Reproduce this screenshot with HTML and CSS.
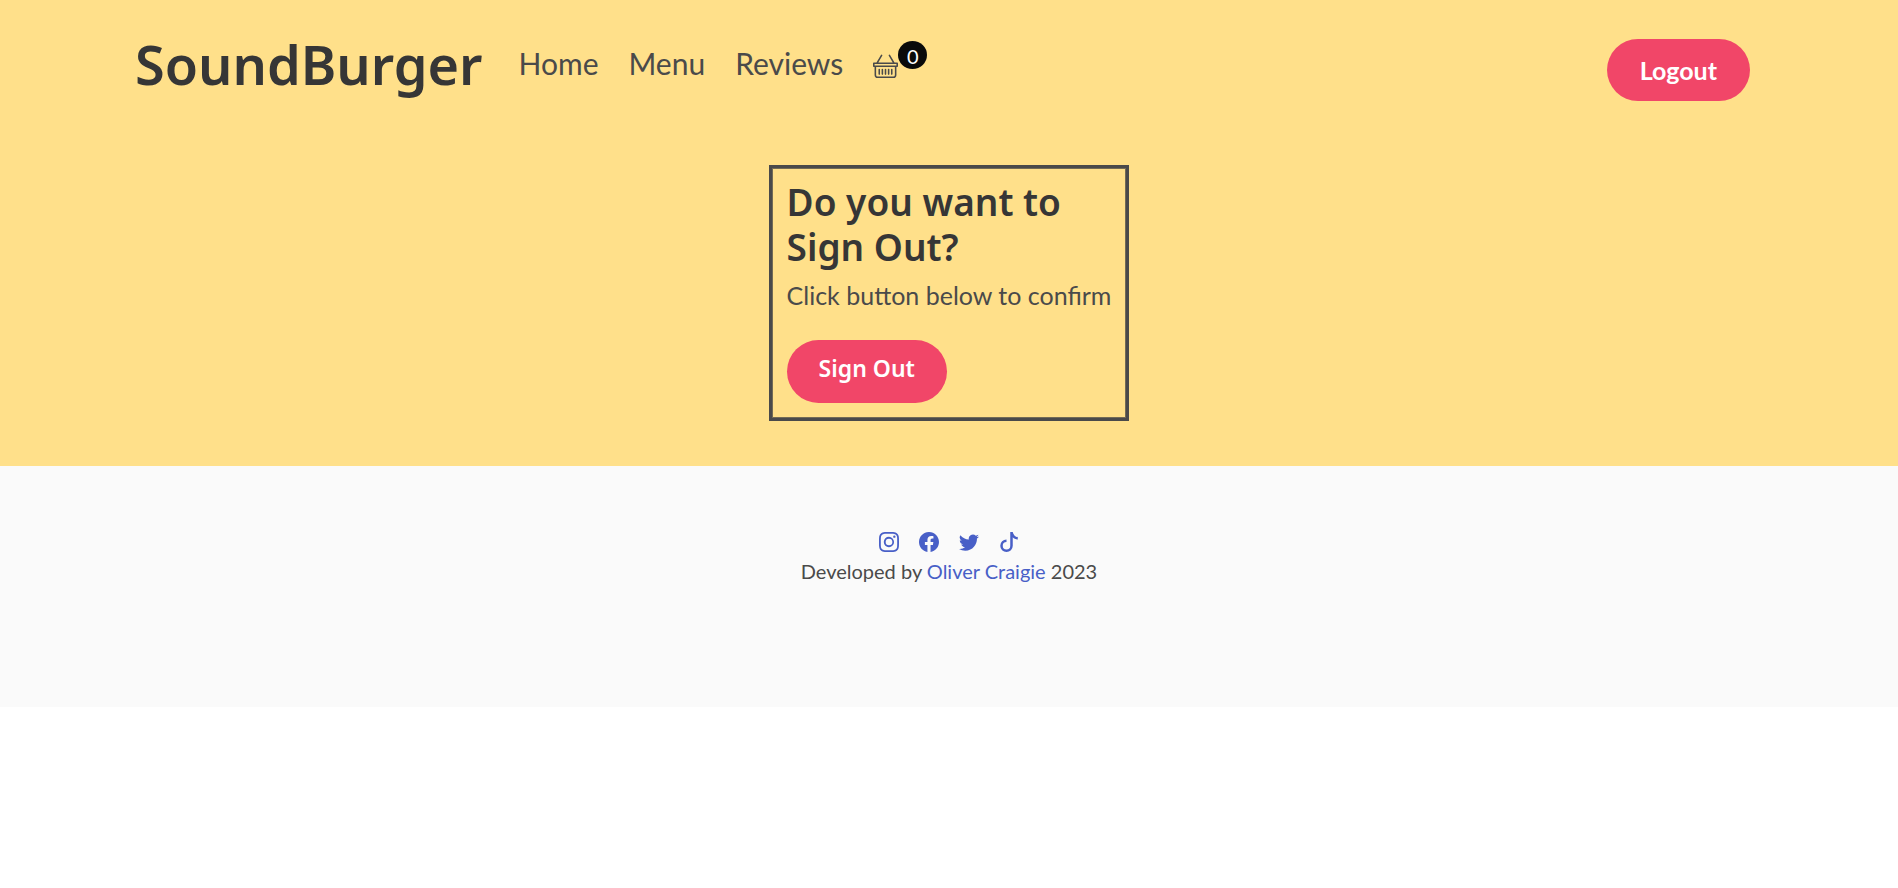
FILE: index.html
```html
<!DOCTYPE html>
<html lang="en">
<head>
<meta charset="utf-8">
<title>SoundBurger - Sign Out</title>
<link rel="stylesheet" href="styles.css">
</head>
<body>
<div class="hero">
  <header class="navbar">
    <a class="brand" href="#">SoundBurger</a>
    <nav class="links">
      <a class="nav-link" href="#">Home</a>
      <a class="nav-link" href="#">Menu</a>
      <a class="nav-link" href="#">Reviews</a>
      <a class="basket" href="#" aria-label="Basket">
        <svg class="basket-icon" viewBox="0 0 16 16" aria-hidden="true"><path d="M5.757 1.071a.5.5 0 0 1 .172.686L3.383 6h9.234L10.07 1.757a.5.5 0 1 1 .858-.514L13.783 6H15.5a.5.5 0 0 1 .5.5v2a.5.5 0 0 1-.5.5H15v5a2 2 0 0 1-2 2H3a2 2 0 0 1-2-2V9H.5a.5.5 0 0 1-.5-.5v-2A.5.5 0 0 1 .5 6h1.717L5.07 1.243a.5.5 0 0 1 .686-.172zM2 9v5a1 1 0 0 0 1 1h10a1 1 0 0 0 1-1V9H2zM1 7v1h14V7H1zm3 3a.5.5 0 0 1 .5.5v3a.5.5 0 0 1-1 0v-3A.5.5 0 0 1 4 10zm2 0a.5.5 0 0 1 .5.5v3a.5.5 0 0 1-1 0v-3A.5.5 0 0 1 6 10zm2 0a.5.5 0 0 1 .5.5v3a.5.5 0 0 1-1 0v-3A.5.5 0 0 1 8 10zm2 0a.5.5 0 0 1 .5.5v3a.5.5 0 0 1-1 0v-3a.5.5 0 0 1 .5-.5zm2 0a.5.5 0 0 1 .5.5v3a.5.5 0 0 1-1 0v-3a.5.5 0 0 1 .5-.5z"/></svg>
        <span class="count">0</span>
      </a>
    </nav>
    <button class="button logout" type="button">Logout</button>
  </header>
  <main class="content">
    <form class="panel">
      <h1 class="title">Do you want to<br>Sign Out?</h1>
      <p class="text">Click button below to confirm</p>
      <button class="button signout" type="button">Sign Out</button>
    </form>
  </main>
</div>
<footer class="footer">
  <div class="social">
    <a class="social-link" href="#" aria-label="Instagram"><svg class="social-icon" viewBox="0 0 16 16" aria-hidden="true"><path d="M8 0C5.829 0 5.556.01 4.703.048 3.85.088 3.269.222 2.76.42a3.917 3.917 0 0 0-1.417.923A3.927 3.927 0 0 0 .42 2.76C.222 3.268.087 3.85.048 4.7.01 5.555 0 5.827 0 8.001c0 2.172.01 2.444.048 3.297.04.852.174 1.433.372 1.942.205.526.478.972.923 1.417.444.445.89.719 1.416.923.51.198 1.09.333 1.942.372C5.555 15.99 5.827 16 8 16s2.444-.01 3.298-.048c.851-.04 1.434-.174 1.943-.372a3.916 3.916 0 0 0 1.416-.923c.445-.445.718-.891.923-1.417.197-.509.332-1.09.372-1.942C15.99 10.445 16 10.173 16 8s-.01-2.445-.048-3.299c-.04-.851-.175-1.433-.372-1.941a3.926 3.926 0 0 0-.923-1.417A3.911 3.911 0 0 0 13.24.42c-.51-.198-1.092-.333-1.943-.372C10.443.01 10.172 0 7.998 0h.003zm-.717 1.442h.718c2.136 0 2.389.007 3.232.046.78.035 1.204.166 1.486.275.373.145.64.319.92.599.28.28.453.546.598.92.11.281.24.705.275 1.485.039.843.047 1.096.047 3.231s-.008 2.389-.047 3.232c-.035.78-.166 1.203-.275 1.485a2.47 2.47 0 0 1-.599.919c-.28.28-.546.453-.92.598-.28.11-.704.24-1.485.276-.843.038-1.096.047-3.232.047s-2.39-.009-3.233-.047c-.78-.036-1.203-.166-1.485-.276a2.478 2.478 0 0 1-.92-.598 2.48 2.48 0 0 1-.6-.92c-.109-.281-.24-.705-.275-1.485-.038-.843-.046-1.096-.046-3.233 0-2.136.008-2.388.046-3.231.036-.78.166-1.204.276-1.486.145-.373.319-.64.599-.92.28-.28.546-.453.92-.598.282-.11.705-.24 1.485-.276.738-.034 1.024-.044 2.515-.045v.002zm4.988 1.328a.96.96 0 1 0 0 1.92.96.96 0 0 0 0-1.92zm-4.27 1.122a4.109 4.109 0 1 0 0 8.217 4.109 4.109 0 0 0 0-8.217zm0 1.441a2.667 2.667 0 1 1 0 5.334 2.667 2.667 0 0 1 0-5.334z"/></svg></a>
    <a class="social-link" href="#" aria-label="Facebook"><svg class="social-icon" viewBox="0 0 16 16" aria-hidden="true"><path d="M16 8.049c0-4.446-3.582-8.05-8-8.05C3.58 0-.002 3.603-.002 8.05c0 4.017 2.926 7.347 6.75 7.951v-5.625h-2.03V8.05H6.75V6.275c0-2.017 1.195-3.131 3.022-3.131.876 0 1.791.157 1.791.157v1.98h-1.009c-.993 0-1.303.621-1.303 1.258v1.51h2.218l-.354 2.326H9.25V16c3.824-.604 6.75-3.934 6.75-7.951z"/></svg></a>
    <a class="social-link" href="#" aria-label="Twitter"><svg class="social-icon" viewBox="0 0 16 16" aria-hidden="true"><path d="M5.026 15c6.038 0 9.341-5.003 9.341-9.334 0-.14 0-.282-.006-.422A6.685 6.685 0 0 0 16 3.542a6.658 6.658 0 0 1-1.889.518 3.301 3.301 0 0 0 1.447-1.817 6.533 6.533 0 0 1-2.087.793A3.286 3.286 0 0 0 7.875 6.03a9.325 9.325 0 0 1-6.767-3.429 3.289 3.289 0 0 0 1.018 4.382A3.323 3.323 0 0 1 .64 6.575v.045a3.288 3.288 0 0 0 2.632 3.218 3.203 3.203 0 0 1-.865.115 3.23 3.23 0 0 1-.614-.057 3.283 3.283 0 0 0 3.067 2.277A6.588 6.588 0 0 1 .78 13.58a6.32 6.32 0 0 1-.78-.045A9.344 9.344 0 0 0 5.026 15z"/></svg></a>
    <a class="social-link" href="#" aria-label="TikTok"><svg class="social-icon" viewBox="0 0 16 16" aria-hidden="true"><path d="M9 0h1.98c.144.715.54 1.617 1.235 2.512C12.895 3.389 13.797 4 15 4v2c-1.753 0-3.07-.814-4-1.829V11a5 5 0 1 1-5-5v2a3 3 0 1 0 3 3V0Z"/></svg></a>
  </div>
  <p class="credit">Developed by <a class="author" href="#">Oliver Craigie</a> 2023</p>
</footer>
</body>
</html>
```
FILE: styles.css
```css
* { box-sizing: border-box; margin: 0; }
body {
  background: #fff;
  color: #4a4a4a;
  font: 20px/30px Lato, sans-serif;
}
a { color: inherit; text-decoration: none; }
svg { display: block; fill: currentColor; }
.hero { background: #ffe08a; padding-bottom: 45px; }
.navbar {
  display: flex;
  align-items: center;
  padding: 24px 148px 24px 135px;
}
.brand {
  padding-bottom: 1px;
  color: #363636;
  font: 600 54px/80px "Noto Sans", sans-serif;
}
.links { display: flex; align-items: center; gap: 30px; margin-left: 36px; }
.nav-link { padding-bottom: 3px; font-size: 30px; line-height: 45px; }
.basket { display: flex; align-items: center; padding-top: 2px; }
.basket-icon { width: 25px; height: 25px; }
.count {
  width: 29px;
  height: 28px;
  margin-bottom: 22px;
  border-radius: 50%;
  background: #0a0a0a;
  color: #fff;
  line-height: 30px;
  text-align: center;
}
.button {
  border: 0;
  border-radius: 32px;
  background: #f14668;
  color: #fff;
  padding: 0 33px;
  height: 62px;
  cursor: pointer;
}
.logout { margin: 10px 0 0 auto; font: 700 25px/62px Lato, sans-serif; }
.content { display: flex; justify-content: center; padding-top: 36px; }
.panel {
  border: 3px solid #4a4a4a;
  box-shadow: inset 0 0 0 1px #736b55;
  padding: 11px 15px 15px;
}
.title {
  color: #363636;
  font: 600 37px/45px "Noto Sans", sans-serif;
}
.text { font-size: 25px; line-height: 38px; margin: 7px 0 26px; }
.signout {
  display: block;
  height: 63px;
  padding: 0 32px 6px;
  font: 600 23px/55px "Noto Sans", sans-serif;
}
.footer { background: #fafafa; padding: 61px 30px 122px; text-align: center; }
.social { display: flex; justify-content: center; gap: 20px; height: 30px; align-items: center; }
.social-icon { width: 20px; height: 20px; }
.credit { line-height: 28px; }
.social-link, .author { color: #485fc7; }
```
